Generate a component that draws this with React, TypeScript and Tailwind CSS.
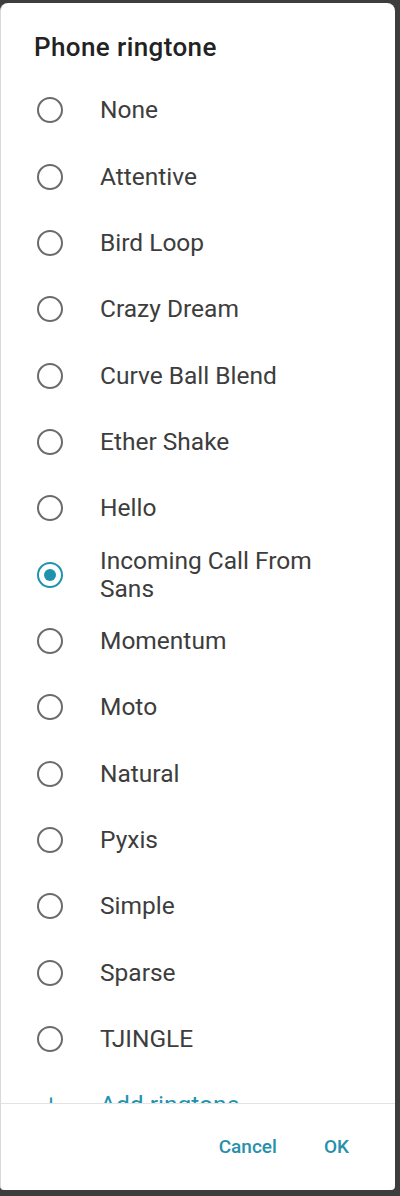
import React from 'react';

const ringtones = [
  'None',
  'Attentive',
  'Bird Loop',
  'Crazy Dream',
  'Curve Ball Blend',
  'Ether Shake',
  'Hello',
  'Incoming Call From Sans',
  'Momentum',
  'Moto',
  'Natural',
  'Pyxis',
  'Simple',
  'Sparse',
  'TJINGLE',
];

function Radio({ checked }: { checked: boolean }) {
  if (checked) {
    return (
      <div className="w-[26px] h-[26px] rounded-full border-[2.5px] border-[#1e93b0] flex items-center justify-center shrink-0">
        <div className="w-[12px] h-[12px] rounded-full bg-[#1e93b0]" />
      </div>
    );
  }
  return <div className="w-[26px] h-[26px] rounded-full border-[2.5px] border-[#6b6b6b] shrink-0" />;
}

export default function App() {
  const selected = 'Incoming Call From Sans';
  return (
    <div
      className="w-[400px] h-[1196px] bg-[#3d3d3d] pt-[3px] pr-[5px] pb-[6px] overflow-hidden"
      style={{ fontFamily: 'Roboto, "Noto Sans", sans-serif' }}
    >
      <div className="h-full bg-white rounded-t-[8px] rounded-b-[4px] border-l border-[#d9d9d9] flex flex-col">
        {/* Title */}
        <div className="h-[74px] shrink-0 pl-[33px] pt-[28px]">
          <h1 className="text-[26px] leading-[32px] font-medium tracking-[0.4px] text-[#222]">Phone ringtone</h1>
        </div>

        {/* List */}
        <div className="flex-1 overflow-hidden">
          {ringtones.map((name) => (
            <div key={name} className="h-[66.35px] flex items-center pl-[36px]">
              <Radio checked={name === selected} />
              <span className="ml-[37px] w-[250px] text-[24.5px] leading-[28px] text-[#3d3d3d]">{name}</span>
            </div>
          ))}
          <div className="h-[66.35px] flex items-center pl-[38px]">
            <span className="w-[24px] text-center text-[34px] leading-none text-[#1e93b0] font-light">+</span>
            <span className="ml-[37px] text-[24.5px] leading-[28px] text-[#1e93b0]">Add ringtone</span>
          </div>
        </div>

        {/* Actions */}
        <div className="h-[87px] shrink-0 border-t border-[#e3e3e3] flex items-center justify-end pr-[46px] gap-[47px]">
          <button className="text-[19px] font-medium text-[#2790aa]">Cancel</button>
          <button className="text-[19px] font-medium text-[#2790aa]">OK</button>
        </div>
      </div>
    </div>
  );
}
